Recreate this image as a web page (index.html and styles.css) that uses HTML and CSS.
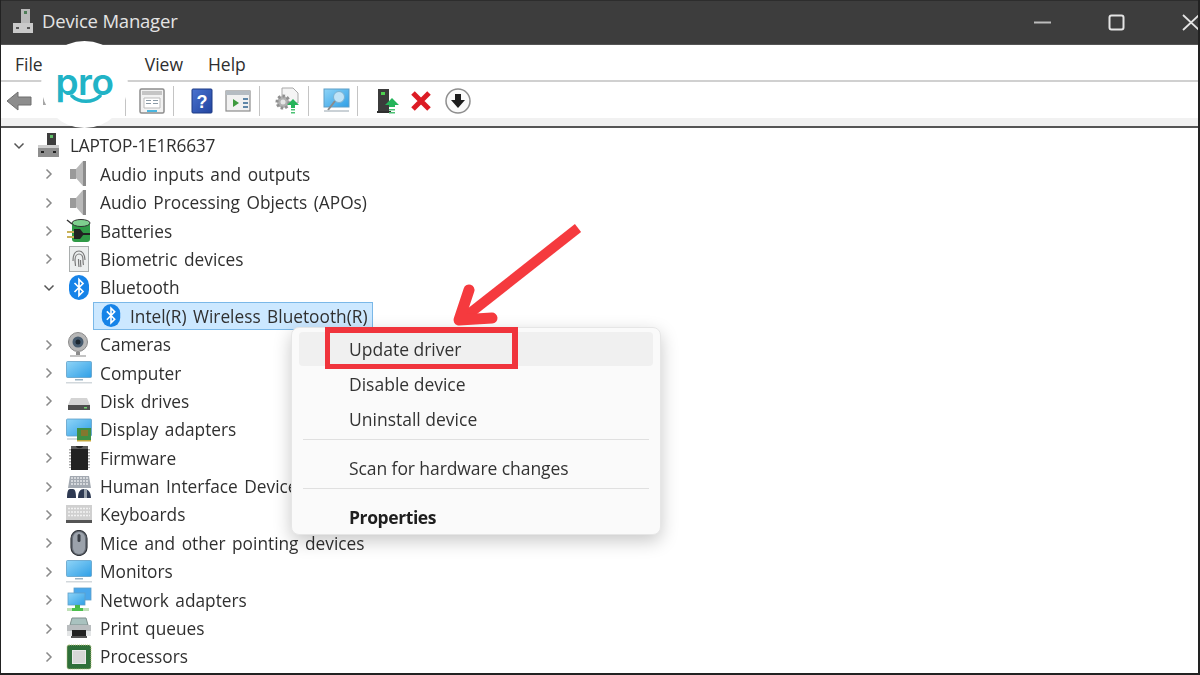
FILE: index.html
```html
<!DOCTYPE html>
<html lang="en">
<head>
<meta charset="utf-8">
<title>Device Manager</title>
<link rel="stylesheet" href="styles.css">
</head>
<body>
<svg class="defs" width="0" height="0" aria-hidden="true">
  <defs>
    <linearGradient id="screen" x1="0" y1="0" x2="1" y2="1"><stop offset="0" stop-color="#8fd4f7"/><stop offset="1" stop-color="#2f9fe6"/></linearGradient>
    <linearGradient id="helpblue" x1="0" y1="0" x2="1" y2="1"><stop offset="0" stop-color="#4a73d0"/><stop offset="1" stop-color="#22449f"/></linearGradient>
    <symbol id="chev-r" viewBox="0 0 10 12"><path d="M2.500 1.500 7 6l-4.500 4.500" fill="none" stroke="#8a8a8a" stroke-width="1.500"/></symbol>
    <symbol id="chev-d" viewBox="0 0 12 10"><path d="M1.500 2.500 6 7l4.500-4.500" fill="none" stroke="#555" stroke-width="1.500"/></symbol>
    <symbol id="speaker" viewBox="0 0 26 26"><path d="M4 8h6v10H4z" fill="#9a9a9a"/><path d="M10 8 17 0h2v25h-2l-7-8z" fill="#b9b9b9"/><path d="M17 0h3v25h-3z" fill="#8c8c8c"/></symbol>
    <symbol id="bt" viewBox="0 0 26 26"><rect x="3" y="0" width="20" height="25" rx="10" fill="#1683e8"/><path d="M8.500 8 17 16.500l-4 4V4.500l4 4-8.500 8.500" fill="none" stroke="#fff" stroke-width="1.700"/></symbol>
    <symbol id="monitor" viewBox="0 0 26 26"><rect x="0.500" y="1.500" width="25" height="16" rx="1" fill="url(#screen)" stroke="#5f9fc8" stroke-width=".8"/><path d="M9 19h8v1.500H9z" fill="#9cb4c4"/><path d="M0 22h26v1.500H0z" fill="#d2d8dc"/></symbol>
  </defs>
</svg>
<div class="window">
  <header class="titlebar">
    <svg class="title-icon" width="22" height="26" viewBox="0 0 22 26"><path d="M9 1h9v14H9z" fill="#b9b9b9"/><path d="M12 3h3v3h-3z" fill="#4f7d58"/><path d="M1 15h20v10H1z" fill="#c9c9c9"/><path d="M4 19h3v2H4zM15 19h3v2h-3z" fill="#555"/></svg>
    <span class="title-text">Device Manager</span>
    <div class="controls">
      <svg class="ctl-min" width="17" height="3" viewBox="0 0 17 3"><path d="M0 1.500h17" stroke="#bdbdbd" stroke-width="2"/></svg>
      <svg class="ctl-max" width="17" height="17" viewBox="0 0 17 17"><rect x="1.500" y="1.500" width="14" height="14" rx="2" fill="none" stroke="#e4e4e4" stroke-width="2"/></svg>
      <svg class="ctl-close" width="16" height="17" viewBox="0 0 16 17"><path d="M1 1l16 15M17 1 1 16" stroke="#e4e4e4" stroke-width="1.800"/></svg>
    </div>
  </header>

  <nav class="menubar">
    <span>File</span><i class="menu-hidden"></i><span>View</span><span>Help</span>
  </nav>

  <div class="toolbar">
    <svg class="tb tb-back" width="27" height="22" viewBox="0 0 27 22"><path d="M1 11 12 2v5h13v8H12v5z" fill="#8d8d8d" stroke="#6f6f6f"/></svg>
    <svg class="tb tb-fwd" width="27" height="22" viewBox="0 0 27 22"><path d="M26 11 15 2v5H2v8h13v5z" fill="#a5a5a5"/></svg>
    <i class="tb-sep sep-a"></i>
    <svg class="tb tb-prop" width="26" height="26" viewBox="0 0 26 26"><rect x="1" y="1" width="24" height="24" rx="1.500" fill="#f2f2f2" stroke="#8d8d8d" stroke-width="1.500"/><path d="M3 3h20v4H3z" fill="#c5c5c5"/><path d="M5 10h16v10H5z" fill="#fff" stroke="#bbb"/><path d="M7 12.500h5M14 12.500h5M7 15.500h5M14 15.500h5" stroke="#8a9aa6"/><path d="M8 22h10v2H8z" fill="#49b6e0"/></svg>
    <i class="tb-sep sep-b"></i>
    <svg class="tb tb-help" width="22" height="26" viewBox="0 0 22 26"><rect x="1" y="1" width="20" height="24" rx="1" fill="url(#helpblue)" stroke="#1d3a85"/><text x="11" y="20" class="qmark">?</text></svg>
    <svg class="tb tb-view" width="26" height="22" viewBox="0 0 26 22"><rect x="1" y="1" width="24" height="20" fill="#f1f1f1" stroke="#8d8d8d" stroke-width="1.200"/><path d="M1 1h24v4H1z" fill="#b5bcc2"/><path d="M8 9l6 4-6 4z" fill="#3d9a3d"/><path d="M18 8h5v2h-5zM18 12h5v2h-5zM18 16h5v2h-5z" fill="#5f87a8"/></svg>
    <i class="tb-sep sep-c"></i>
    <svg class="tb tb-gear" width="26" height="28" viewBox="0 0 26 28"><path d="M8 1h11l5 5v10H8z" fill="#f4f4f4" stroke="#a8a8a8"/><circle cx="9" cy="15" r="6" fill="#b0b0b0" stroke="#8f8f8f" stroke-width="3" stroke-dasharray="2.500 2"/><circle cx="9" cy="15" r="2.500" fill="#e6e6e6"/><path d="M19 12l6 6h-4v3h-4v-3h-4z" fill="#25b45a"/><path d="M17 22h4v1.500h-4zM17 25h4v1.500h-4z" fill="#4cc274"/></svg>
    <i class="tb-sep sep-d"></i>
    <svg class="tb tb-scan" width="27" height="26" viewBox="0 0 27 26"><rect x="1" y="1" width="25" height="18" fill="url(#screen)" stroke="#5f9fc8"/><circle cx="16" cy="9" r="5.500" fill="#bfe3f7" stroke="#7cb2d2"/><path d="M12 13 5 22" stroke="#8b8b8b" stroke-width="2"/><path d="M1 23h25" stroke="#b9c2c8" stroke-width="1.500"/></svg>
    <i class="tb-sep sep-e"></i>
    <svg class="tb tb-tower" width="24" height="26" viewBox="0 0 24 26"><path d="M2 1h11v22H2z" fill="#3b3b3b"/><path d="M5 4h4v3H5z" fill="#4fd04f"/><path d="M1 23h14v2H1z" fill="#2e2e2e"/><path d="M16 10l7 7h-4v2h-6v-2H9z" fill="#25b45a"/><path d="M13 21h6v1.500h-6zM13 24h6v1.500h-6z" fill="#4cc274"/></svg>
    <svg class="tb tb-x" width="22" height="22" viewBox="0 0 22 22"><path d="M3 3l16 16M19 3 3 19" stroke="#dc1b24" stroke-width="5"/></svg>
    <svg class="tb tb-down" width="26" height="26" viewBox="0 0 26 26"><circle cx="13" cy="13" r="12" fill="#fafafa" stroke="#8e8e8e" stroke-width="1.500"/><path d="M10 6h6v6h4l-7 8-7-8h4z" fill="#1c1c1c"/></svg>
  </div>
  <div class="toolbar-foot"></div>

  <main class="tree">
    <div class="row lvl0"><svg class="chev-d" width="12" height="10"><use href="#chev-d"/></svg>
      <svg class="ico" width="24" height="26" viewBox="0 0 24 26"><path d="M10 0h9v13h-9z" fill="#3d3d3d"/><path d="M13 2h3v3h-3z" fill="#5fbf68"/><path d="M1 12h21v12H1z" fill="#8e8e8e"/><path d="M1 12h21v3H1z" fill="#cfcfcf"/><path d="M4 18h3v2H4zM16 18h3v2h-3z" fill="#222"/></svg>
      <span class="root-text">LAPTOP-1E1R6637</span></div>
    <div class="row lvl1"><svg class="chev-r" width="10" height="12"><use href="#chev-r"/></svg><svg class="ico" width="26" height="26"><use href="#speaker"/></svg><span>Audio inputs and outputs</span></div>
    <div class="row lvl1"><svg class="chev-r" width="10" height="12"><use href="#chev-r"/></svg><svg class="ico" width="26" height="26"><use href="#speaker"/></svg><span>Audio Processing Objects (APOs)</span></div>
    <div class="row lvl1"><svg class="chev-r" width="10" height="12"><use href="#chev-r"/></svg>
      <svg class="ico" width="26" height="26" viewBox="0 0 26 26"><path d="M6 5h18v16a3 3 0 0 1-3 3H9a3 3 0 0 1-3-3z" fill="#2f9a46"/><ellipse cx="15" cy="5" rx="9" ry="3.500" fill="#7fd08e" stroke="#333"/><path d="M1 2l5 4" stroke="#333" stroke-width="1.500"/><path d="M1 14h8M1 19h8" stroke="#c9b25a" stroke-width="2"/><path d="M8 11h6l4 5-4 5H8z" fill="#222"/><path d="M17 16h7" stroke="#222" stroke-width="2"/></svg>
      <span>Batteries</span></div>
    <div class="row lvl1"><svg class="chev-r" width="10" height="12"><use href="#chev-r"/></svg>
      <svg class="ico" width="26" height="26" viewBox="0 0 26 26"><rect x="3.500" y="0.500" width="19" height="25" fill="#eceeee" stroke="#a9adad"/><path d="M7 15c0-8 3-10 6-10s6 3 6 9M9.500 20c0-2-.5-3-.5-6 0-4 2-6 4-6s4 2 4 6c0 3 .5 5 .5 5M13 21c-.5-3-.5-5-.5-8M15 21c-.5-2-.5-4-.5-7" fill="none" stroke="#7a7a7a" stroke-width="1.200"/></svg>
      <span>Biometric devices</span></div>
    <div class="row lvl1"><svg class="chev-d chev-in" width="12" height="10"><use href="#chev-d"/></svg><svg class="ico" width="26" height="26"><use href="#bt"/></svg><span>Bluetooth</span></div>
    <div class="row lvl2"><div class="selected"><svg class="ico-sel" width="24" height="26"><use href="#bt"/></svg><span>Intel(R) Wireless Bluetooth(R)</span></div></div>
    <div class="row lvl1"><svg class="chev-r" width="10" height="12"><use href="#chev-r"/></svg>
      <svg class="ico" width="26" height="26" viewBox="0 0 26 26"><circle cx="12" cy="10" r="9.500" fill="#b7b7b7" stroke="#8a8a8a"/><circle cx="12" cy="10" r="5.500" fill="#475b6e"/><circle cx="12" cy="10" r="2.500" fill="#1d2730"/><path d="M10 20h4v3h-4z" fill="#8c8c8c"/><path d="M4 23h16v2H4z" fill="#c4c4c4"/></svg>
      <span>Cameras</span></div>
    <div class="row lvl1"><svg class="chev-r" width="10" height="12"><use href="#chev-r"/></svg><svg class="ico" width="26" height="26"><use href="#monitor"/></svg><span>Computer</span></div>
    <div class="row lvl1"><svg class="chev-r" width="10" height="12"><use href="#chev-r"/></svg>
      <svg class="ico" width="26" height="26" viewBox="0 0 26 26"><path d="M5 10h16l3 7H2z" fill="#d4d4d4"/><path d="M2 17h22v5H2z" fill="#4d4d4d"/><path d="M18 19h3v1.500h-3z" fill="#6fd06f"/></svg>
      <span>Disk drives</span></div>
    <div class="row lvl1"><svg class="chev-r" width="10" height="12"><use href="#chev-r"/></svg>
      <svg class="ico" width="26" height="26" viewBox="0 0 26 26"><rect x="0.500" y="2" width="25" height="17" rx="1" fill="url(#screen)" stroke="#5f9fc8" stroke-width=".8"/><path d="M1 22h10" stroke="#c9d1d6" stroke-width="1.500"/><path d="M11 11h14v12H11z" fill="#3f8f45"/><path d="M15 13h7v6h-7z" fill="#83772e"/><path d="M11 23h14v1.500H11z" fill="#c2a83c"/></svg>
      <span>Display adapters</span></div>
    <div class="row lvl1"><svg class="chev-r" width="10" height="12"><use href="#chev-r"/></svg>
      <svg class="ico" width="26" height="26" viewBox="0 0 26 26"><path d="M5 1h17v24H5z" fill="#222"/><path d="M5 1h5c0 3 7 3 7 0h5v3H5z" fill="#5c5c5c"/><path d="M4 4v19M23 4v19" stroke="#aaa" stroke-width="2" stroke-dasharray="1.500 1.500"/></svg>
      <span>Firmware</span></div>
    <div class="row lvl1"><svg class="chev-r" width="10" height="12"><use href="#chev-r"/></svg>
      <svg class="ico" width="26" height="26" viewBox="0 0 26 26"><path d="M4 2h19l2 12H2z" fill="#a3a9b1"/><path d="M5 4h17M5 7h17M5 10h17" stroke="#e6e8ea" stroke-width="1.300" stroke-dasharray="2 1"/><path d="M1 24c0-6 1-9 3-9h3c2 0 3 3 3 9zM12 24c0-6 2-9 6-9s7 3 7 9z" fill="#2e3a52"/><path d="M18 15h3v9h-3z" fill="#9aa3ad"/></svg>
      <span>Human Interface Devices</span></div>
    <div class="row lvl1"><svg class="chev-r" width="10" height="12"><use href="#chev-r"/></svg>
      <svg class="ico" width="26" height="26" viewBox="0 0 26 26"><path d="M0 3h26v15H0z" fill="#d0d0d0"/><path d="M2 6.500h22M2 10h22M2 13.500h22" stroke="#f2f2f2" stroke-width="1.500" stroke-dasharray="2 1"/><path d="M0 18h26v3H0z" fill="#555"/></svg>
      <span>Keyboards</span></div>
    <div class="row lvl1"><svg class="chev-r" width="10" height="12"><use href="#chev-r"/></svg>
      <svg class="ico" width="26" height="26" viewBox="0 0 26 26"><rect x="5" y="0.500" width="16" height="25" rx="8" fill="#6a7079" stroke="#33373d" stroke-width="1.200"/><rect x="7" y="2" width="12" height="22" rx="6" fill="#9ba2ab"/><rect x="11.500" y="4" width="3" height="8" rx="1.500" fill="#3a3f46"/></svg>
      <span>Mice and other pointing devices</span></div>
    <div class="row lvl1"><svg class="chev-r" width="10" height="12"><use href="#chev-r"/></svg><svg class="ico" width="26" height="26"><use href="#monitor"/></svg><span>Monitors</span></div>
    <div class="row lvl1"><svg class="chev-r" width="10" height="12"><use href="#chev-r"/></svg>
      <svg class="ico" width="26" height="26" viewBox="0 0 26 26"><rect x="8" y="1" width="17" height="12" fill="#4aa8ec" stroke="#5f9fc8" stroke-width=".8"/><rect x="2" y="6" width="17" height="12" fill="url(#screen)" stroke="#5f9fc8" stroke-width=".8"/><path d="M9 18h5v3H9z" fill="#49b949"/><path d="M1 21h22v3H1z" fill="#bfe0b8"/><path d="M6 21h11v3H6z" fill="#4cc04c"/></svg>
      <span>Network adapters</span></div>
    <div class="row lvl1"><svg class="chev-r" width="10" height="12"><use href="#chev-r"/></svg>
      <svg class="ico" width="26" height="26" viewBox="0 0 26 26"><path d="M6 2h14l2 7H4z" fill="#a9c2bf" stroke="#7f8f8d"/><path d="M1 9h24v10H1z" fill="#b9bdbf"/><path d="M1 15h24v5H1z" fill="#e3e5e6"/><path d="M6 14h14v6H6z" fill="#222"/><path d="M5 20h16v2H5z" fill="#555"/></svg>
      <span>Print queues</span></div>
    <div class="row lvl1"><svg class="chev-r" width="10" height="12"><use href="#chev-r"/></svg>
      <svg class="ico" width="26" height="26" viewBox="0 0 26 26"><rect x="1" y="1" width="24" height="24" rx="2" fill="#2f6f3a"/><rect x="1" y="1" width="24" height="24" rx="2" fill="none" stroke="#b8c27a" stroke-width="1" stroke-dasharray="1 1"/><rect x="6.500" y="6.500" width="13" height="13" fill="#d7d7d7" stroke="#e9e9e9"/></svg>
      <span>Processors</span></div>
  </main>
</div>

<aside class="logo"><span class="logo-text">pro</span><svg class="logo-smile" width="32" height="10" viewBox="0 0 32 10"><path d="M2 2c7 7 21 7 28 0" fill="none" stroke="#21b3c6" stroke-width="3.500" stroke-linecap="round"/></svg></aside>

<div class="context-menu">
  <div class="cm-item cm-hover">Update driver</div>
  <div class="cm-item">Disable device</div>
  <div class="cm-item">Uninstall device</div>
  <div class="cm-sep"></div>
  <div class="cm-item cm-scan">Scan for hardware changes</div>
  <div class="cm-sep"></div>
  <div class="cm-item cm-bold">Properties</div>
</div>

<div class="highlight-box"></div>
<svg class="arrow" width="140" height="120" viewBox="0 0 140 120"><path d="M133 8 20 97" fill="none" stroke="#f53a3e" stroke-width="10"/><path d="M24 70 14 100l33-2" fill="none" stroke="#f53a3e" stroke-width="11" stroke-linecap="round" stroke-linejoin="round"/></svg>
</body>
</html>
```

FILE: styles.css
```css
* { box-sizing: border-box; }
html, body { margin: 0; padding: 0; }
body {
  width: 1200px;
  height: 675px;
  overflow: hidden;
  position: relative;
  background: #fff;
  font-family: "Open Sans", "Noto Sans", sans-serif;
  color: #2e2e2e;
  filter: blur(0.35px);
}
.defs { position: absolute; }
.window {
  width: 1200px;
  height: 675px;
  display: flex;
  flex-direction: column;
  border-left: 1px solid #222;
  border-right: 2px solid #222;
  border-bottom: 2px solid #222;
  overflow: hidden;
}
.titlebar {
  height: 45px;
  flex: none;
  display: flex;
  align-items: center;
  background: #3d3d3d;
  border-top: 1px solid #2d2d2d;
  border-bottom: 1px solid #555;
  padding: 0 0 4px 11px;
  color: #e4e4e4;
  font-size: 18.5px;
}
.title-icon { margin-right: 8px; }
.title-text { letter-spacing: -0.2px; }
.controls { margin-left: auto; margin-top: 3px; display: flex; align-items: center; }
.ctl-min { margin-right: 57px; }
.ctl-max { margin-right: 57px; }
.menubar {
  height: 37px;
  flex: none;
  display: flex;
  align-items: center;
  gap: 25px;
  padding: 3px 0 0 14px;
  font-size: 17.5px;
  background: #fff;
  border-bottom: 2px solid #d0d0d0;
}
.menu-hidden { width: 52px; flex: none; }
.toolbar {
  height: 36px;
  flex: none;
  display: flex;
  align-items: center;
  padding: 2px 0 0 5px;
  background: #fff;
}
.toolbar-foot { height: 10px; flex: none; background: #f1f1f1; border-bottom: 2px solid #555; }
.tb { flex: none; }
.tb-sep { flex: none; width: 1px; height: 30px; background: #c4c4c4; }
.tb-fwd { margin-left: 8px; }
.sep-a { margin-left: 57px; }
.tb-prop { margin-left: 13px; }
.sep-b { margin-left: 8px; }
.tb-help { margin-left: 17px; }
.tb-view { margin-left: 12px; }
.sep-c { margin-left: 8px; }
.tb-gear { margin-left: 14px; }
.sep-d { margin-left: 8px; }
.tb-scan { margin-left: 14px; }
.sep-e { margin-left: 7px; }
.tb-tower { margin-left: 18px; }
.tb-x { margin-left: 10px; }
.tb-down { margin-left: 13px; }
.qmark { font-family: "Liberation Sans", sans-serif; font-size: 18px; font-weight: 700; fill: #fff; text-anchor: middle; }
.tree {
  flex: 1;
  padding-top: 3.7px;
  display: flex;
  flex-direction: column;
  font-size: 17.3px;
  word-spacing: 2px;
  overflow: hidden;
  color: #303030;
}
.row { height: 28.4px; flex: none; display: flex; align-items: center; white-space: nowrap; }
.lvl0 { padding-left: 12px; }
.lvl1 { padding-left: 43px; }
.lvl2 { padding-left: 92px; }
.chev-d { margin-right: 12px; flex: none; }
.chev-in { margin-left: -1px; margin-right: 11px; }
.chev-r { margin-right: 12px; flex: none; }
.ico { flex: none; margin-right: 8px; }
.lvl0 .ico { margin-right: 9px; }
.root-text { letter-spacing: -0.25px; }
.selected {
  display: flex;
  align-items: center;
  width: 280px;
  height: 28px;
  padding-left: 5px;
  gap: 7px;
  background: #cce8ff;
  border: 1px solid #7ab8e8;
}
.ico-sel { flex: none; }
.logo {
  position: absolute;
  left: 41px;
  top: 41px;
  width: 87px;
  height: 87px;
  border-radius: 50%;
  background: #fff;
  display: flex;
  flex-direction: column;
  align-items: center;
}
.logo-text {
  font-family: Inter, sans-serif;
  font-weight: 600;
  font-size: 37px;
  line-height: 40px;
  margin-top: 21px;
  color: #21b3c6;
  letter-spacing: -0.5px;
}
.logo-smile { position: absolute; left: 29px; top: 53px; }
.context-menu {
  position: absolute;
  left: 291px;
  top: 327px;
  width: 370px;
  height: 208px;
  padding: 4px 7px 0;
  background: #fafafa;
  border: 1px solid #e6e6e6;
  border-radius: 8px;
  box-shadow: 0 6px 18px rgba(0, 0, 0, 0.22);
  font-size: 17.5px;
  color: #333;
}
.cm-item { height: 35px; display: flex; align-items: center; padding-left: 50px; border-radius: 4px; }
.cm-hover { background: #f0f0f0; height: 34px; }
.cm-scan { letter-spacing: -0.08px; }
.cm-bold { font-weight: 700; color: #1e1e1e; letter-spacing: -0.4px; }
.cm-sep { height: 1px; margin: 3px 4px 10px; background: #e0e0e0; }
.highlight-box {
  position: absolute;
  left: 325px;
  top: 327px;
  width: 193px;
  height: 42px;
  border-style: solid;
  border-color: #f0343c;
  border-width: 6px 6px 5px 5px;
}
.arrow { position: absolute; left: 445px; top: 220px; }
```
